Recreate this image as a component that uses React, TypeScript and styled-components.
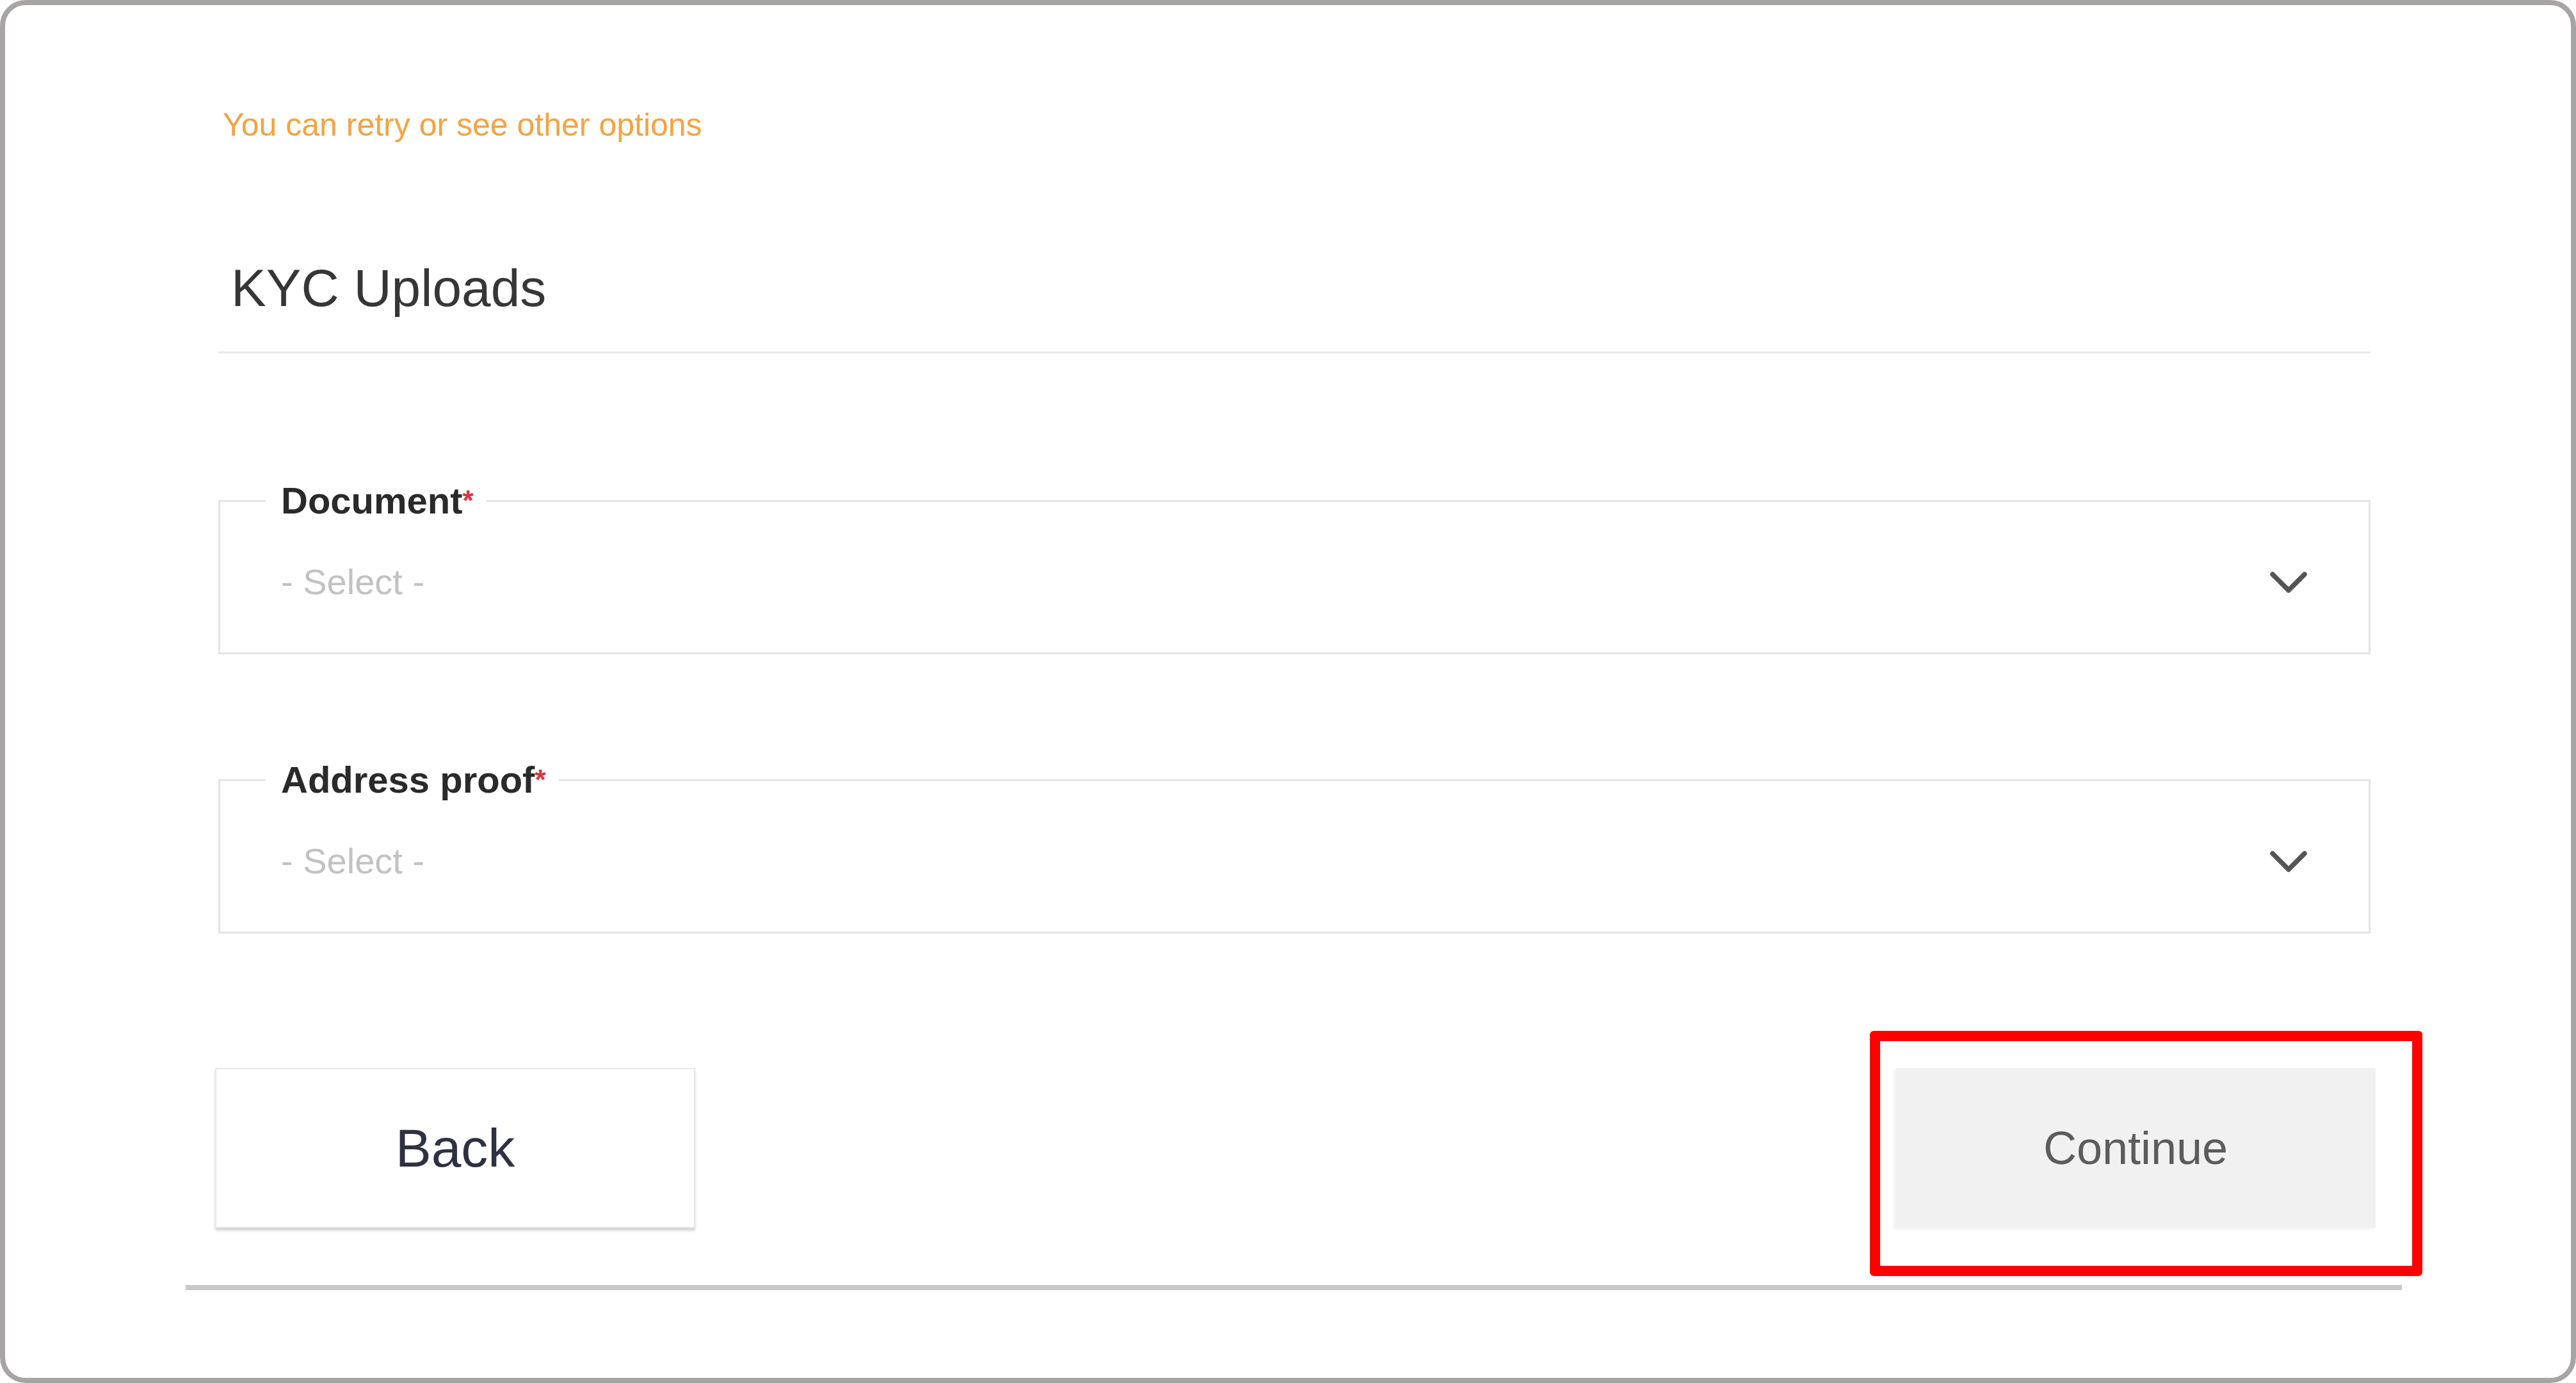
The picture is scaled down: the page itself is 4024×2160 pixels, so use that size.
import React from "react"
import styled, { createGlobalStyle } from "styled-components"

const GlobalStyle = createGlobalStyle`
  html, body {
    margin: 0;
    padding: 0;
    background: #ffffff;
  }
  body {
    font-family: "Liberation Sans", Arial, sans-serif;
  }
  * {
    box-sizing: border-box;
  }
`

const Frame = styled.div`
  width: 4024px;
  height: 2160px;
  border: 8px solid #a8a4a4;
  border-radius: 40px;
  background: #ffffff;
  overflow: hidden;
`

const Content = styled.div`
  width: 3362px;
  margin-left: 333px;
  padding-top: 157px;
  display: flex;
  flex-direction: column;
`

const Notice = styled.div`
  padding-left: 7px;
  font-size: 50px;
  line-height: 60px;
  color: #f4a340;
`

const Heading = styled.h2`
  margin: 184px 0 0 0;
  padding-left: 20px;
  font-size: 82px;
  line-height: 82px;
  font-weight: 400;
  color: #363636;
`

const Divider = styled.div`
  margin-top: 58px;
  height: 3px;
  background: #ebebeb;
`

const Field = styled.fieldset<{ $gap: number }>`
  margin: ${(p) => p.$gap}px 0 0 0;
  padding: 0 94px 14px 95px;
  border: 3px solid #e4e4e4;
  min-width: 0;
`

const Legend = styled.legend`
  margin-left: -24px;
  padding: 0 20px 0 24px;
  font-size: 58px;
  line-height: 60px;
  font-weight: 700;
  color: #2a2a2a;
`

const Required = styled.span`
  color: #e0303a;
  font-size: 44px;
  vertical-align: top;
`

const SelectRow = styled.div`
  height: 193px;
  display: flex;
  align-items: center;
  justify-content: space-between;
`

const Placeholder = styled.span`
  font-size: 56px;
  color: #c2c2c2;
`

const Chevron = styled.svg`
  width: 62px;
  height: 38px;
  flex: none;
`

const ButtonRow = styled.div`
  margin: 210px -8px 0 -5px;
  display: flex;
  justify-content: space-between;
  align-items: flex-start;
`

const Button = styled.button<{ $variant?: "outline" | "muted" }>`
  width: 750px;
  height: 250px;
  font-family: "Liberation Sans", Arial, sans-serif;
  cursor: pointer;
  ${(p) =>
    p.$variant === "muted"
      ? `
    background: #f1f1f1;
    border: none;
    color: #5c5c5c;
    font-size: 72px;
    box-shadow: -3px 3px 4px rgba(0, 0, 0, 0.05);
  `
      : `
    background: #ffffff;
    border: 2px solid #e9e9e9;
    color: #2d3142;
    font-size: 84px;
    box-shadow: 0 4px 4px rgba(0, 0, 0, 0.18);
  `}
`

const Highlight = styled.div`
  position: relative;
`

const HighlightBox = styled.div`
  position: absolute;
  left: -40px;
  right: -73px;
  top: -58px;
  bottom: -75px;
  border: 16px solid #ff0000;
  border-radius: 6px;
  pointer-events: none;
`

const BottomRule = styled.div`
  margin: 89px -49px 0 -51px;
  height: 8px;
  background: #c8c8c8;
`

const ChevronIcon = () => (
  <Chevron viewBox="0 0 62 38">
    <polyline points="6,7 31,32 56,7" fill="none" stroke="#555555" strokeWidth="7.5" strokeLinecap="round" strokeLinejoin="round" />
  </Chevron>
)

const SelectField = ({ label, gap }: { label: string; gap: number }) => (
  <Field $gap={gap}>
    <Legend>
      {label}
      <Required>*</Required>
    </Legend>
    <SelectRow>
      <Placeholder>- Select -</Placeholder>
      <ChevronIcon />
    </SelectRow>
  </Field>
)

const App: React.FC = () => {
  return (
    <>
      <GlobalStyle />
      <Frame>
        <Content>
          <Notice>You can retry or see other options</Notice>
          <Heading>KYC Uploads</Heading>
          <Divider />
          <SelectField label="Document" gap={200} />
          <SelectField label="Address proof" gap={166} />
          <ButtonRow>
            <Button $variant="outline">Back</Button>
            <Highlight>
              <Button $variant="muted">Continue</Button>
              <HighlightBox />
            </Highlight>
          </ButtonRow>
          <BottomRule />
        </Content>
      </Frame>
    </>
  )
}

export default App
